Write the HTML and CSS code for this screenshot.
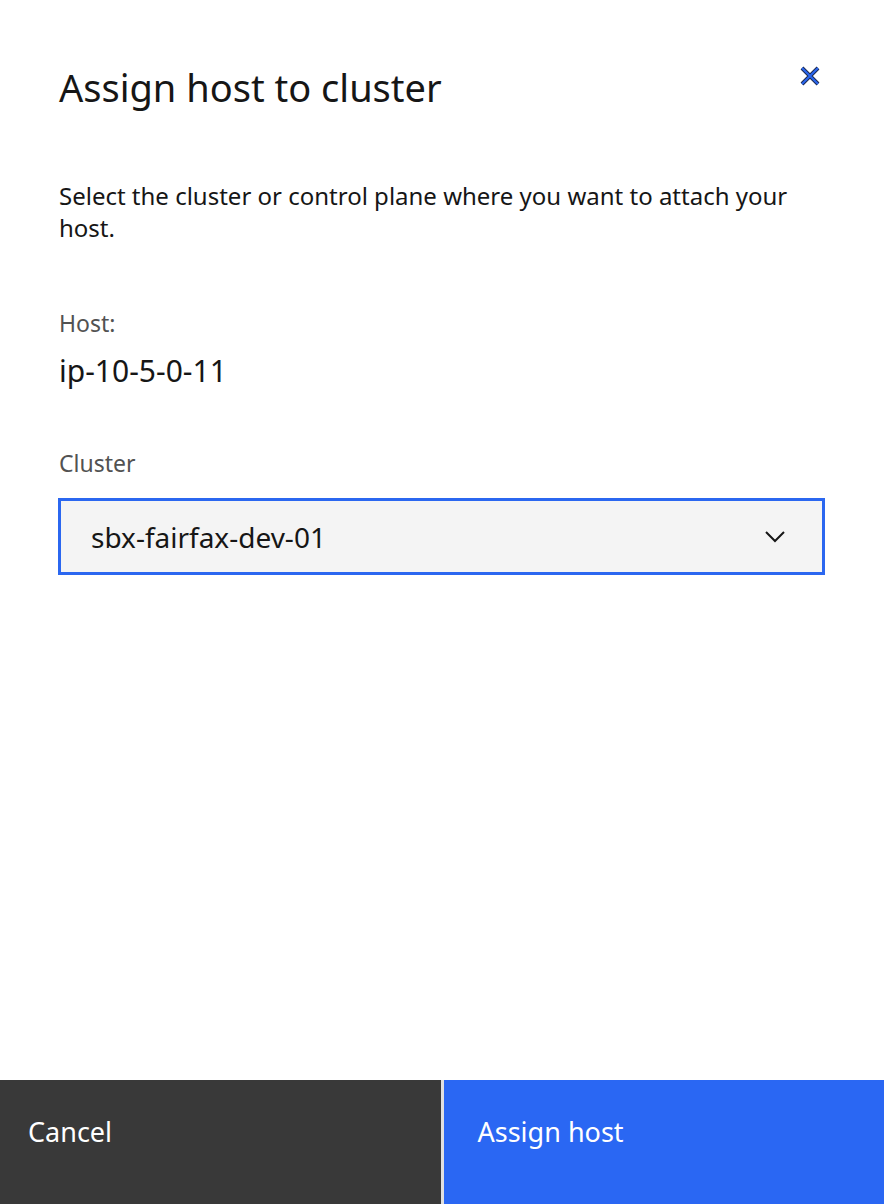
FILE: index.html
```html
<!DOCTYPE html>
<html lang="en">
<head>
<meta charset="utf-8">
<title>Assign host to cluster</title>
<link rel="stylesheet" href="styles.css">
</head>
<body>
<div class="modal">
  <header class="modal-header">
    <h1 class="modal-title">Assign host to cluster</h1>
    <button class="close-btn" aria-label="Close">
      <svg width="22" height="22" viewBox="0 0 22 22">
        <path d="M3 3 L19 19 M19 3 L3 19" stroke="#1d2b4f" stroke-width="4" stroke-linecap="butt"/>
        <path d="M3 3 L19 19 M19 3 L3 19" stroke="#2b67f0" stroke-width="2"/>
      </svg>
    </button>
  </header>
  <main class="modal-body">
    <p class="desc">Select the cluster or control plane where you want to attach your host.</p>
    <div class="field field-host">
      <div class="label">Host:</div>
      <div class="value">ip-10-5-0-11</div>
    </div>
    <div class="field">
      <div class="label label-cluster">Cluster</div>
      <div class="select">
        <span class="select-text">sbx-fairfax-dev-01</span>
        <svg class="chevron" width="22" height="14" viewBox="0 0 22 14">
          <path d="M2 2 L11 11 L20 2" fill="none" stroke="#161616" stroke-width="2"/>
        </svg>
      </div>
    </div>
  </main>
  <footer class="modal-footer">
    <button class="btn btn-secondary">Cancel</button>
    <button class="btn btn-primary">Assign host</button>
  </footer>
</div>
</body>
</html>
```

FILE: styles.css
```css
* { box-sizing: border-box; }
html, body {
  margin: 0;
  padding: 0;
  background: #ffffff;
}
body {
  font-family: "Noto Sans", "Open Sans", sans-serif;
  color: #161616;
}
.modal {
  display: flex;
  flex-direction: column;
  width: 884px;
  height: 1204px;
}
.modal-header {
  display: flex;
  justify-content: space-between;
  align-items: flex-start;
  padding: 63px 63px 0 59px;
}
.modal-title {
  margin: 0;
  font-weight: 400;
  font-size: 38px;
  line-height: 48px;
  color: #161616;
}
.close-btn {
  border: 0;
  background: transparent;
  padding: 0;
  margin-top: 2px;
  width: 22px;
  height: 22px;
  display: flex;
}
.modal-body {
  flex: 1;
  padding: 69px 59px 0 59px;
}
.desc {
  margin: 0 0 65px 0;
  font-size: 24px;
  line-height: 32px;
}
.field-host { margin-bottom: 60px; }
.label {
  font-size: 23px;
  line-height: 28px;
  color: #525252;
  margin-bottom: 16px;
}
.label-cluster { margin-bottom: 21px; }
.value {
  font-size: 30px;
  line-height: 36px;
}
.select {
  display: flex;
  align-items: center;
  justify-content: space-between;
  height: 77px;
  margin-left: -1px;
  border: 3px solid #2b67f0;
  background: #f4f4f4;
  padding: 0 36px 0 30px;
}
.select-text {
  font-size: 28px;
}
.modal-footer {
  display: grid;
  grid-template-columns: 1fr 1fr;
  gap: 3px;
  height: 124px;
  background: #e0e0e0;
}
.btn {
  border: 0;
  margin: 0;
  text-align: left;
  font-family: inherit;
  font-size: 27px;
  line-height: 36px;
  color: #ffffff;
  display: flex;
  align-items: flex-start;
  padding: 34px 28px;
}
.btn-secondary { background: #393939; }
.btn-primary { background: #2a67f3; padding-left: 34px; }
```
